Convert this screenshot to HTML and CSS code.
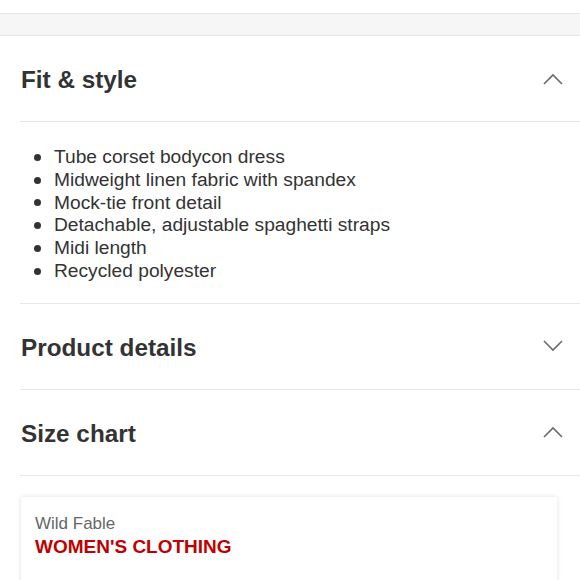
FILE: index.html
```html
<!DOCTYPE html>
<html>
<head>
<meta charset="utf-8">
<link rel="stylesheet" href="styles.css">
</head>
<body>
<div class="page">
  <div class="top-space"></div>
  <div class="band"></div>
  <div class="accordion">
    <section class="section">
      <div class="header">
        <h2 class="title">Fit &amp; style</h2>
        <svg class="chev" width="20" height="12" viewBox="0 0 20 12"><path d="M1 11 L10 2 L19 11" fill="none" stroke="#6b6b6b" stroke-width="1.6"/></svg>
      </div>
      <ul class="bullets">
        <li>Tube corset bodycon dress</li>
        <li>Midweight linen fabric with spandex</li>
        <li>Mock-tie front detail</li>
        <li>Detachable, adjustable spaghetti straps</li>
        <li>Midi length</li>
        <li>Recycled polyester</li>
      </ul>
    </section>
    <section class="section">
      <div class="header">
        <h2 class="title">Product details</h2>
        <svg class="chev" width="20" height="12" viewBox="0 0 20 12"><path d="M1 1 L10 10 L19 1" fill="none" stroke="#6b6b6b" stroke-width="1.6"/></svg>
      </div>
    </section>
    <section class="section">
      <div class="header">
        <h2 class="title">Size chart</h2>
        <svg class="chev" width="20" height="12" viewBox="0 0 20 12"><path d="M1 11 L10 2 L19 11" fill="none" stroke="#6b6b6b" stroke-width="1.6"/></svg>
      </div>
    </section>
  </div>
  <div class="card">
    <div class="brand">Wild Fable</div>
    <div class="category">WOMEN'S CLOTHING</div>
  </div>
</div>
</body>
</html>
```

FILE: styles.css
```css
html, body {
  margin: 0;
  padding: 0;
  background: #ffffff;
}
body {
  font-family: "Liberation Sans", Arial, sans-serif;
  color: #333333;
  width: 580px;
  height: 580px;
  overflow: hidden;
}
.top-space {
  height: 13px;
}
.band {
  height: 21px;
  background: #f6f6f6;
  border-top: 1px solid #e4e4e4;
  border-bottom: 1px solid #e4e4e4;
}
.accordion {
  margin-left: 20px;
}
.section {
  border-bottom: 1px solid #e6e6e6;
}
.header {
  box-sizing: border-box;
  height: 85px;
  padding: 3px 17px 0 1px;
  display: flex;
  align-items: center;
  justify-content: space-between;
}
.title {
  margin: 0;
  font-size: 24.3px;
  font-weight: bold;
  color: #333333;
}
.chev {
  display: block;
  margin-top: -3px;
}
.section:first-child .header {
  height: 86px;
  border-bottom: 1px solid #e6e6e6;
}
.bullets {
  margin: 0;
  padding: 24px 0 20px 14px;
  list-style: none;
  font-size: 19.2px;
  line-height: 22.8px;
  color: #333333;
}
.bullets li {
  display: flex;
  align-items: center;
}
.bullets li::before {
  content: "";
  flex: none;
  width: 7px;
  height: 7px;
  border-radius: 50%;
  background: #333333;
  margin-right: 13px;
}
.card {
  margin: 21px 23px 0 21px;
  padding: 16px 14px 30px;
  background: #ffffff;
  box-shadow: 0 0 5px rgba(0, 0, 0, 0.12);
  height: 80px;
}
.brand {
  font-size: 17px;
  line-height: 22px;
  color: #666666;
}
.category {
  font-size: 19px;
  line-height: 24px;
  font-weight: bold;
  color: #c00000;
}
```
